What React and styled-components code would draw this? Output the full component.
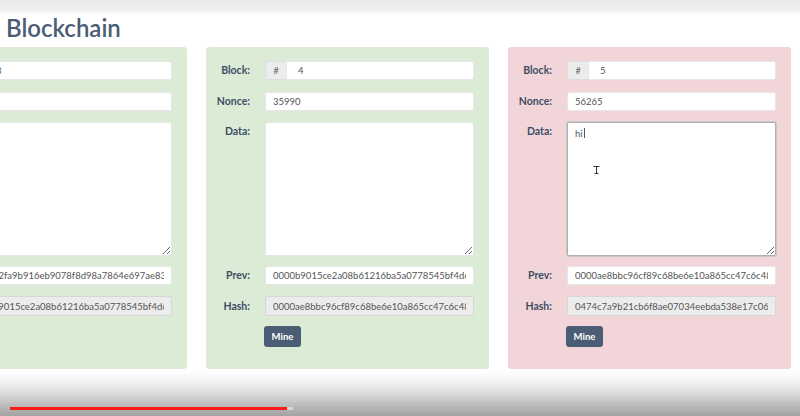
import styled, { createGlobalStyle } from 'styled-components';

const GlobalStyle = createGlobalStyle`
  html, body {
    margin: 0;
    padding: 0;
    background: #ffffff;
    overflow: hidden;
  }

  body {
    font-family: Lato, "Open Sans", "Liberation Sans", sans-serif;
  }
`;

const Page = styled.div`
  width: 800px;
  height: 416px;
  display: flex;
  flex-direction: column;
  overflow: hidden;
  background: linear-gradient(#e8e8e8 0, #efefef 9px, #ffffff 15px);
`;

const Title = styled.h1`
  margin: 0;
  padding: 14px 0 0 6px;
  height: 33px;
  font-size: 24px;
  font-weight: 600;
  line-height: 28px;
  color: #4a5d74;
`;

const Row = styled.div`
  display: flex;
  gap: 19px;
  margin-left: -96px;
`;

const Card = styled.div`
  flex: 0 0 283px;
  box-sizing: border-box;
  height: 322px;
  padding: 14px 15px 0 4px;
  border-radius: 3px;
  background: ${(p) => (p.$valid ? '#dcebd6' : '#f2d5d8')};
  display: grid;
  grid-template-columns: 40px 1fr;
  column-gap: 15px;
  grid-auto-rows: min-content;
`;

const Label = styled.label`
  font-size: 10.5px;
  font-weight: 700;
  line-height: 13px;
  color: #3c4e64;
  text-align: right;
  white-space: nowrap;
  align-self: ${(p) => (p.$top ? 'start' : 'center')};
  padding-top: ${(p) => (p.$top ? '3px' : '0')};
  margin-bottom: ${(p) => p.$gap || 12}px;
`;

const Field = styled.div`
  margin-bottom: ${(p) => p.$gap || 12}px;
  position: relative;
`;

const Group = styled.div`
  display: flex;
  height: 19px;
`;

const Addon = styled.span`
  flex: 0 0 21px;
  display: flex;
  align-items: center;
  justify-content: center;
  background: #ececec;
  border: 1px solid #dedede;
  border-right: none;
  border-radius: 2px 0 0 2px;
  box-sizing: border-box;
  font-size: 9px;
  color: #666;
`;

const Input = styled.input`
  display: block;
  box-sizing: border-box;
  width: 100%;
  min-width: 0;
  height: ${(p) => (p.$ro ? 20 : 19)}px;
  margin: 0;
  padding: 0 ${(p) => (p.$pad || 7)}px;
  border: 1px solid ${(p) => (p.$ro ? '#d6d6d6' : '#e6e6e6')};
  border-radius: ${(p) => (p.$joined ? '0 2px 2px 0' : '2px')};
  background: ${(p) => (p.$ro ? '#ececec' : '#ffffff')};
  font-family: Lato, "Open Sans", "Liberation Sans", sans-serif;
  font-size: 9.5px;
  color: #555;
  outline: none;
`;

const Area = styled.textarea`
  display: block;
  box-sizing: border-box;
  width: 100%;
  height: 134px;
  margin: 0;
  padding: 5px 7px;
  border: 1px solid ${(p) => (p.$focus ? '#b0b0b0' : '#e6e6e6')};
  box-shadow: ${(p) => (p.$focus ? '0 0 0 1px #c8c8c8' : 'none')};
  border-radius: 2px;
  background: #fff;
  font-family: Lato, "Open Sans", "Liberation Sans", sans-serif;
  font-size: 9.5px;
  color: #555;
  resize: vertical;
  outline: none;
`;

const Caret = styled.span`
  position: absolute;
  left: 17px;
  top: 6px;
  width: 1px;
  height: 10px;
  background: #555;
`;

const Pointer = styled.svg`
  position: absolute;
  left: 26px;
  top: 44px;
`;

const Mine = styled.button`
  grid-column: 2;
  justify-self: start;
  width: 37px;
  height: 21px;
  margin-left: -1px;
  padding: 0;
  border: none;
  border-radius: 3px;
  background: #4a5d74;
  color: #fff;
  font-family: Lato, "Open Sans", "Liberation Sans", sans-serif;
  font-size: 9.5px;
  font-weight: 700;
`;

const Player = styled.div`
  flex: 1;
  margin-top: 1px;
  position: relative;
  background: linear-gradient(#ffffff 0, #f6f6f6 10px, #e6e6e6 18px, #d2d2d2 27px, #bcbcbc 35px, #a3a3a3 100%);
`;

const Track = styled.div`
  position: absolute;
  left: 10px;
  right: 0;
  top: 37px;
  height: 3px;
  background: #b4b4b4;
`;

const Progress = styled.div`
  height: 100%;
  background: #ff1a1a;
  box-shadow: 6px 0 0 #d7d7d7;
`;

const blocks = [
  {
    id: 3,
    nonce: '11316',
    data: '',
    prev: '000002fa9b916eb9078f8d98a7864e697ae83c1d4b0e8a2',
    hash: '0000b9015ce2a08b61216ba5a0778545bf4d6a1e39c7',
    valid: true,
  },
  {
    id: 4,
    nonce: '35990',
    data: '',
    prev: '0000b9015ce2a08b61216ba5a0778545bf4d6a1e39c7',
    hash: '0000ae8bbc96cf89c68be6e10a865cc47c6c48d2f71b',
    valid: true,
  },
  {
    id: 5,
    nonce: '56265',
    data: 'hi',
    prev: '0000ae8bbc96cf89c68be6e10a865cc47c6c48d2f71b',
    hash: '0474c7a9b21cb6f8ae07034eebda538e17c06a3f52d9',
    valid: false,
  },
];

function Block({ block }) {
  const focused = !block.valid;

  return (
    <Card $valid={block.valid}>
      <Label>Block:</Label>
      <Field>
        <Group>
          <Addon>#</Addon>
          <Input $joined $pad={11} value={block.id} readOnly />
        </Group>
      </Field>
      <Label $gap={11}>Nonce:</Label>
      <Field $gap={11}>
        <Input value={block.nonce} readOnly />
      </Field>
      <Label $top $gap={10}>Data:</Label>
      <Field $gap={10}>
        <Area $focus={focused} value={block.data} readOnly />
        {focused && <Caret />}
        {focused && (
          <Pointer width="7" height="8" viewBox="0 0 7 8">
            <path d="M0.5 0.5h6M3.5 0.5v7M1.5 7.5h4" stroke="#333" strokeWidth="1" fill="none" />
          </Pointer>
        )}
      </Field>
      <Label $gap={11}>Prev:</Label>
      <Field $gap={11}>
        <Input value={block.prev} readOnly />
      </Field>
      <Label $gap={10}>Hash:</Label>
      <Field $gap={10}>
        <Input $ro value={block.hash} readOnly />
      </Field>
      <Mine type="button">Mine</Mine>
    </Card>
  );
}

export default function App() {
  return (
    <>
      <GlobalStyle />
      <Page>
        <Title>Blockchain</Title>
        <Row>
          {blocks.map((block) => (
            <Block key={block.id} block={block} />
          ))}
        </Row>
        <Player>
          <Track>
            <Progress style={{ width: `${(277 / 790) * 100}%` }} />
          </Track>
        </Player>
      </Page>
    </>
  );
}
